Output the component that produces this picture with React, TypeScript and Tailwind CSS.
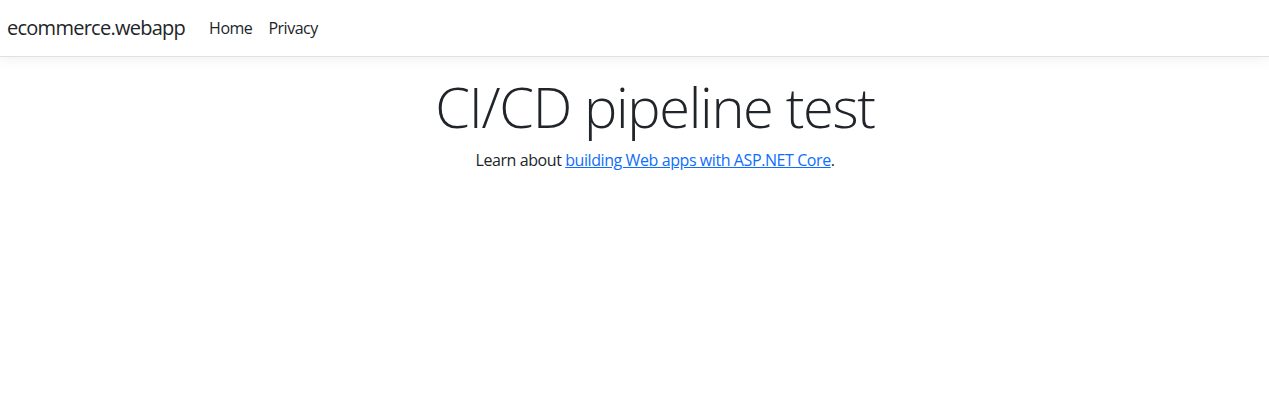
export default function App() {
  return (
    <div className="min-h-screen bg-white text-[#212529] font-['Open_Sans',sans-serif] text-base">
      <header>
        <nav className="bg-white border-b border-[#dee2e6] shadow-[0_0.25rem_0.75rem_rgba(0,0,0,0.05)] mb-4 py-2">
          <div className="flex items-center px-[7px]">
            <a href="#" className="text-xl leading-[30px] py-[5px] mr-4 tracking-[-0.037em] text-[#212529]">
              ecommerce.webapp
            </a>
            <ul className="flex tracking-[-0.03em]">
              <li>
                <a href="#" className="block px-2 py-2 leading-6 text-[#212529]">Home</a>
              </li>
              <li>
                <a href="#" className="block px-2 py-2 leading-6 text-[#212529]">Privacy</a>
              </li>
            </ul>
          </div>
        </nav>
      </header>
      {/* page content sits a little right of the window centre */}
      <main className="pb-4 pl-[41px]">
        <div className="text-center">
          <h1 className="text-[56px] font-light leading-[1.2] mb-2 tracking-[-0.024em]">CI/CD pipeline test</h1>
          <p className="leading-6 tracking-[-0.026em]">
            Learn about{' '}
            <a href="#" className="text-[#0d6efd] underline">building Web apps with ASP.NET Core</a>.
          </p>
        </div>
      </main>
    </div>
  );
}
